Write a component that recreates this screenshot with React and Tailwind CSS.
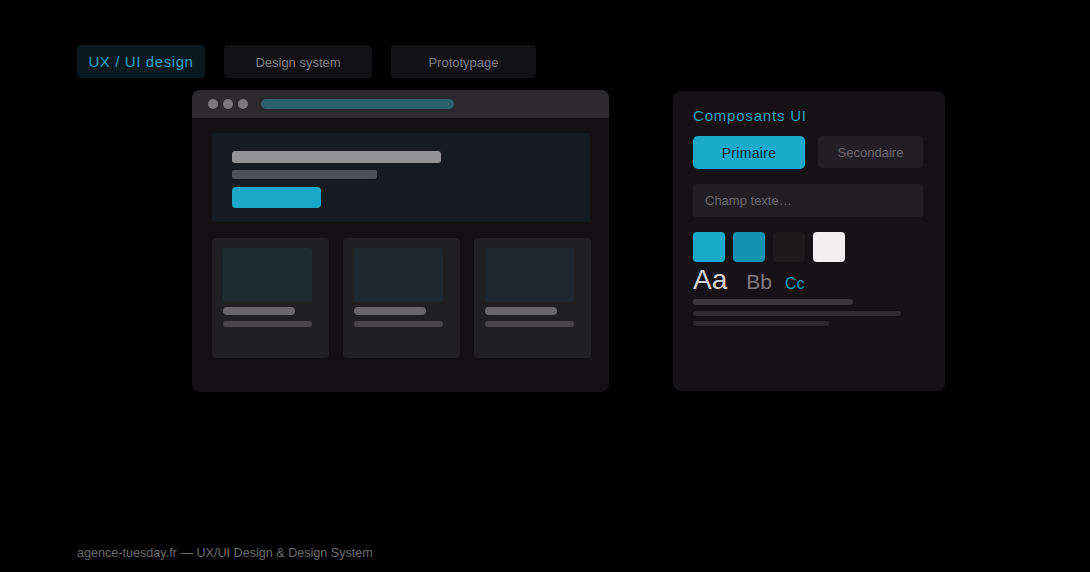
import React from "react";

const tabs = ["Design system", "Prototypage"];

function Card({ img }) {
  return (
    <div className="flex-1 h-[120px] rounded-[4px] bg-[#201f21] px-[11px] pt-[10px]">
      <div className={`h-[54px] w-[89px] rounded-[2px] ${img}`} />
      <div className="mt-[5px] h-[8px] w-[72px] rounded-full bg-[#68666a]" />
      <div className="mt-[6px] h-[6px] w-[89px] rounded-full bg-[#48464a]" />
    </div>
  );
}

export default function App() {
  return (
    <div
      className="w-[1090px] h-[572px] bg-black flex flex-col px-[77px] pt-[45px] pb-[9px]"
      style={{ fontFamily: '"Liberation Sans", Arial, sans-serif' }}
    >
      {/* tabs */}
      <div className="flex gap-[19px]">
        <div className="w-[128px] h-[33px] pt-[2px] rounded-[4px] bg-[#08191f] flex items-center justify-center text-[15px] tracking-[0.6px] text-[#2aa3bf]">
          UX / UI design
        </div>
        <div className="w-[148px] h-[33px] pt-[3px] rounded-[4px] bg-[#121214] flex items-center justify-center text-[13px] text-[#7c7b7e]">
          {tabs[0]}
        </div>
        <div className="w-[145px] h-[33px] pt-[3px] rounded-[4px] bg-[#121214] flex items-center justify-center text-[13px] text-[#7c7b7e]">
          {tabs[1]}
        </div>
      </div>

      <div className="flex items-start ml-[115px] mt-[12px] gap-[64px]">
        {/* browser mockup */}
        <div className="w-[417px] h-[302px] rounded-[8px] bg-[#121012] overflow-hidden">
          <div className="h-[28px] bg-[#2b292c] flex items-center px-[16px] gap-[5px]">
            <span className="w-[10px] h-[10px] rounded-full bg-[#7a787b]" />
            <span className="w-[10px] h-[10px] rounded-full bg-[#7a787b]" />
            <span className="w-[10px] h-[10px] rounded-full bg-[#7a787b]" />
            <span className="ml-[8px] w-[193px] h-[10px] rounded-full bg-[#2a5f6b]" />
          </div>
          <div className="px-[19px] pl-[20px] pt-[15px]">
            <div className="h-[89px] rounded-[2px] bg-[#151b21] px-[20px] pt-[18px]">
              <div className="h-[12px] w-[209px] rounded-[3px] bg-[#929297]" />
              <div className="mt-[7px] h-[9px] w-[145px] rounded-[2px] bg-[#4c5058]" />
              <div className="mt-[8px] h-[21px] w-[89px] rounded-[4px] bg-[#1aa8c8]" />
            </div>
            <div className="flex gap-[14px] mt-[16px] -mr-[1px]">
              <Card img="bg-[#1e2b2f]" />
              <Card img="bg-[#1f2a30]" />
              <Card img="bg-[#1f2830]" />
            </div>
          </div>
        </div>

        {/* components panel */}
        <div className="w-[272px] h-[300px] mt-[1px] rounded-[8px] bg-[#141214] px-[20px] pt-[16px]">
          <div className="text-[15px] tracking-[0.8px] text-[#2aa0bd] leading-[18px]">Composants UI</div>
          <div className="flex gap-[13px] mt-[11px]">
            <div className="w-[112px] h-[33px] pt-[1px] rounded-[5px] bg-[#1aabcc] flex items-center justify-center text-[14px] tracking-[0.3px] text-[#0e2a33]">
              Primaire
            </div>
            <div className="w-[105px] h-[32px] pt-[2px] rounded-[4px] bg-[#221f24] flex items-center justify-center text-[13px] text-[#6a686c]">
              Secondaire
            </div>
          </div>
          <div className="mt-[15px] h-[33px] w-[230px] pt-[1px] rounded-[3px] bg-[#211f22] flex items-center px-[12px] text-[13px] text-[#6a686c]">
            Champ texte…
          </div>
          <div className="flex gap-[8px] mt-[15px]">
            <div className="w-[32px] h-[30px] rounded-[4px] bg-[#1aabcc]" />
            <div className="w-[32px] h-[30px] rounded-[4px] bg-[#1293b0]" />
            <div className="w-[32px] h-[30px] rounded-[4px] bg-[#1d1b1b]" />
            <div className="w-[32px] h-[30px] rounded-[4px] bg-[#f3eff1]" />
          </div>
          <div className="flex items-baseline mt-[1px] h-[36px]">
            <span className="text-[28px] leading-[34px] text-[#d8d4d6]">Aa</span>
            <span className="ml-[19px] text-[21px] text-[#7e7a7e]">Bb</span>
            <span className="ml-[13px] text-[16px] text-[#1a9ab8]">Cc</span>
          </div>
          <div className="h-[6px] w-[160px] rounded-full bg-[#3a383b]" />
          <div className="mt-[6px] h-[5px] w-[208px] rounded-full bg-[#2e2c2f]" />
          <div className="mt-[5px] h-[5px] w-[136px] rounded-full bg-[#2a282b]" />
        </div>
      </div>

      <div className="mt-auto text-[12.6px] text-[#6a6a6a]">
        agence-tuesday.fr — UX/UI Design &amp; Design System
      </div>
    </div>
  );
}
